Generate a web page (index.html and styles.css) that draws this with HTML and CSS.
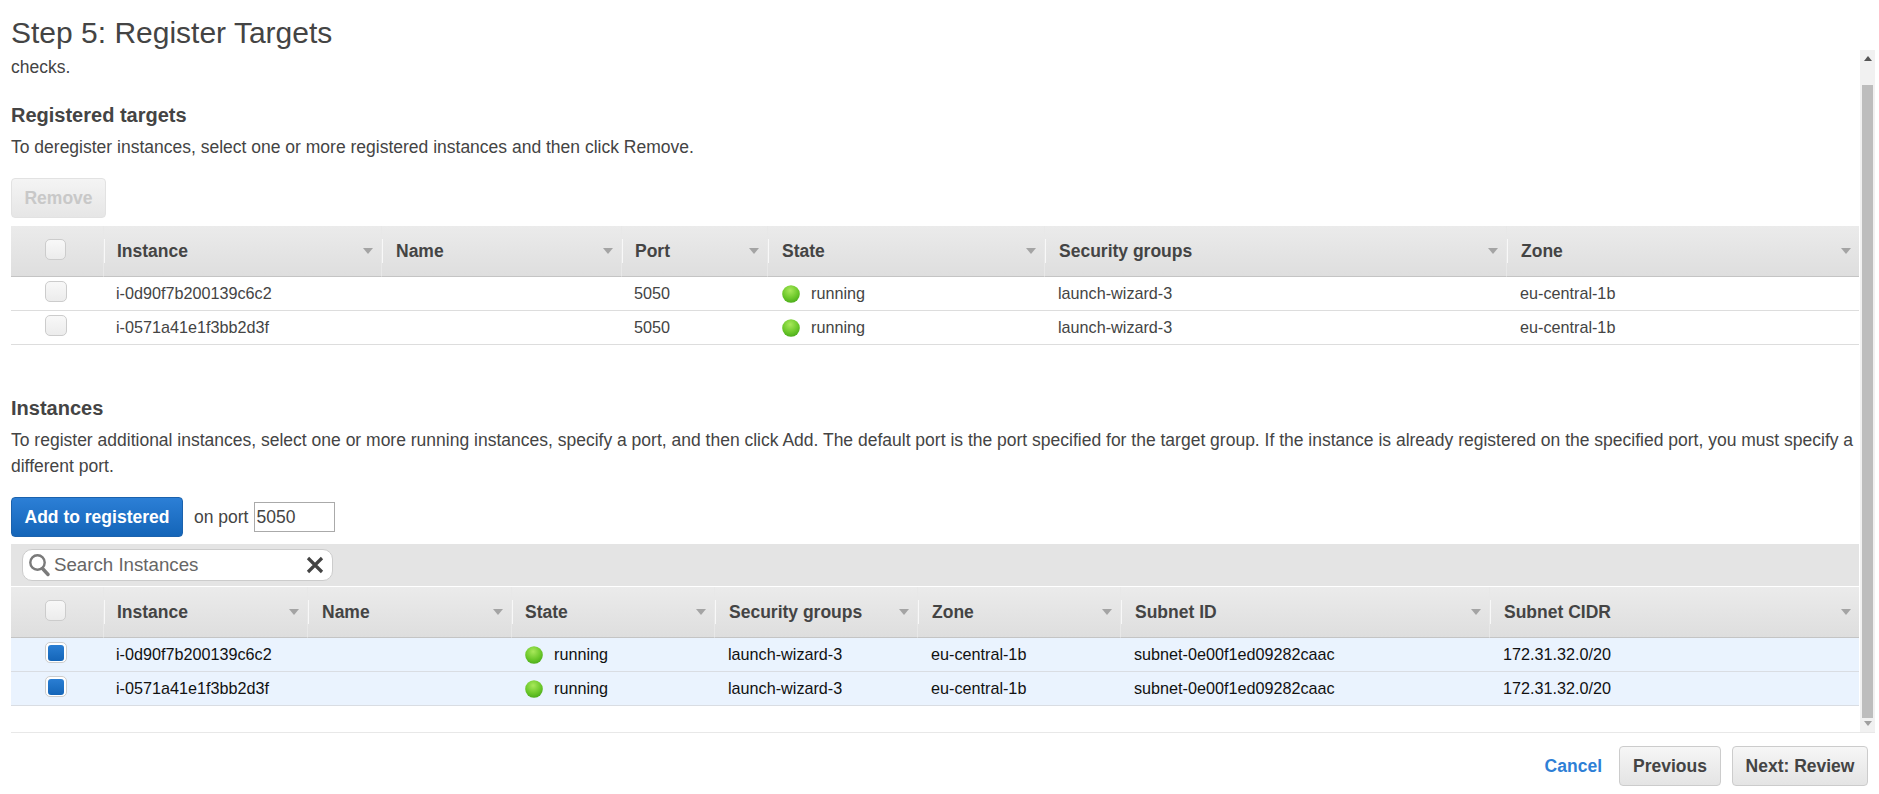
FILE: index.html
```html
<!DOCTYPE html>
<html lang="en">
<head>
<meta charset="utf-8">
<title>Step 5: Register Targets</title>
<link rel="stylesheet" href="styles.css">
</head>
<body>
<svg class="defs" width="0" height="0" aria-hidden="true">
  <defs>
    <radialGradient id="ball" cx="45%" cy="30%" r="75%">
      <stop offset="0" stop-color="#a8e85a"/>
      <stop offset="0.6" stop-color="#6cc82a"/>
      <stop offset="1" stop-color="#46a818"/>
    </radialGradient>
  </defs>
</svg>
<main class="wizard">
  <h1 class="title">Step 5: Register Targets</h1>
  <div class="scroller">
    <div class="content">
      <p class="cut">checks.</p>
      <h2 class="section-title">Registered targets</h2>
      <p class="desc">To deregister instances, select one or more registered instances and then click Remove.</p>
      <button class="btn btn-disabled" type="button">Remove</button>
      <table class="grid grid-a">
        <thead>
          <tr>
            <th class="c-sel"><span class="cb"></span></th>
            <th class="a1"><span class="th-in">Instance<i class="sort"></i></span></th>
            <th class="a2"><span class="th-in">Name<i class="sort"></i></span></th>
            <th class="a3"><span class="th-in">Port<i class="sort"></i></span></th>
            <th class="a4"><span class="th-in">State<i class="sort"></i></span></th>
            <th class="a5"><span class="th-in">Security groups<i class="sort"></i></span></th>
            <th><span class="th-in">Zone<i class="sort"></i></span></th>
          </tr>
        </thead>
        <tbody>
          <tr>
            <td class="sel"><span class="cb cb-row"></span></td>
            <td>i-0d90f7b200139c6c2</td><td></td><td>5050</td>
            <td><span class="state"><svg class="dot" viewBox="0 0 18 18"><circle cx="9" cy="9" r="8.8" fill="url(#ball)"/></svg>running</span></td>
            <td>launch-wizard-3</td><td>eu-central-1b</td>
          </tr>
          <tr>
            <td class="sel"><span class="cb cb-row"></span></td>
            <td>i-0571a41e1f3bb2d3f</td><td></td><td>5050</td>
            <td><span class="state"><svg class="dot" viewBox="0 0 18 18"><circle cx="9" cy="9" r="8.8" fill="url(#ball)"/></svg>running</span></td>
            <td>launch-wizard-3</td><td>eu-central-1b</td>
          </tr>
        </tbody>
      </table>
      <h2 class="section-title section-two">Instances</h2>
      <p class="desc desc-two">To register additional instances, select one or more running instances, specify a port, and then click Add. The default port is the port specified for the target group. If the instance is already registered on the specified port, you must specify a different port.</p>
      <div class="add-row">
        <button class="btn btn-primary" type="button">Add to registered</button>
        <span class="on-port">on port</span>
        <input class="port" type="text" value="5050" aria-label="Port">
      </div>
      <div class="toolbar">
        <div class="search">
          <svg class="search-icon" viewBox="0 0 22 24"><circle cx="9.5" cy="9.5" r="7.2" fill="none" stroke="#7a7a7a" stroke-width="2.4"/><path d="M14.5 15.5l5.5 6" stroke="#7a7a7a" stroke-width="3.4" stroke-linecap="round"/></svg>
          <span class="search-text">Search Instances</span>
          <svg class="clear-icon" viewBox="0 0 18 18"><path d="M2 2l14 14M16 2L2 16" stroke="#444" stroke-width="3.2"/></svg>
        </div>
      </div>
      <table class="grid grid-b">
        <thead>
          <tr>
            <th class="c-sel"><span class="cb"></span></th>
            <th class="b1"><span class="th-in">Instance<i class="sort"></i></span></th>
            <th class="b2"><span class="th-in">Name<i class="sort"></i></span></th>
            <th class="b3"><span class="th-in">State<i class="sort"></i></span></th>
            <th class="b4"><span class="th-in">Security groups<i class="sort"></i></span></th>
            <th class="b5"><span class="th-in">Zone<i class="sort"></i></span></th>
            <th class="b6"><span class="th-in">Subnet ID<i class="sort"></i></span></th>
            <th><span class="th-in">Subnet CIDR<i class="sort"></i></span></th>
          </tr>
        </thead>
        <tbody>
          <tr class="picked">
            <td class="sel"><span class="cb cb-row cb-on"></span></td>
            <td>i-0d90f7b200139c6c2</td><td></td>
            <td><span class="state"><svg class="dot" viewBox="0 0 18 18"><circle cx="9" cy="9" r="8.8" fill="url(#ball)"/></svg>running</span></td>
            <td>launch-wizard-3</td><td>eu-central-1b</td><td>subnet-0e00f1ed09282caac</td><td>172.31.32.0/20</td>
          </tr>
          <tr class="picked">
            <td class="sel"><span class="cb cb-row cb-on"></span></td>
            <td>i-0571a41e1f3bb2d3f</td><td></td>
            <td><span class="state"><svg class="dot" viewBox="0 0 18 18"><circle cx="9" cy="9" r="8.8" fill="url(#ball)"/></svg>running</span></td>
            <td>launch-wizard-3</td><td>eu-central-1b</td><td>subnet-0e00f1ed09282caac</td><td>172.31.32.0/20</td>
          </tr>
        </tbody>
      </table>
    </div>
    <div class="scrollbar">
      <i class="sb-up"></i>
      <div class="sb-thumb"></div>
      <i class="sb-down"></i>
    </div>
  </div>
  <footer class="footer">
    <a class="cancel" href="#">Cancel</a>
    <button class="btn btn-prev" type="button">Previous</button>
    <button class="btn btn-next" type="button">Next: Review</button>
  </footer>
</main>
</body>
</html>
```
FILE: styles.css
```css
* { box-sizing: border-box; }
html, body { margin: 0; height: 100%; background: #fff; overflow: hidden; }
body { font-family: "Liberation Sans", Arial, sans-serif; font-size: 17.5px; color: #444; }
.defs { position: absolute; }
.wizard { width: 1879px; height: 794px; display: flex; flex-direction: column; }
.title { margin: 0; height: 50px; padding: 16px 0 0 11px; font-size: 30px; line-height: 34px; font-weight: 400; color: #444; }
.scroller { height: 682px; display: flex; overflow: hidden; }
.content { width: 1860px; padding-left: 11px; flex: none; }
.cut { margin: 8px 0 0; line-height: 18px; }
.section-title { margin: 0; font-size: 20px; line-height: 24px; font-weight: 700; color: #444; padding-top: 27px; }
.desc { margin: 10px 0 0; line-height: 20px; color: #444; }
.section-two { padding-top: 51px; }
.desc-two { line-height: 26px; margin-top: 7px; width: 1848px; }
.btn { font-family: inherit; font-size: 17.5px; font-weight: 700; height: 40px; border-radius: 4px; border: 1px solid #ccc; background: linear-gradient(#f6f6f6, #e4e4e4); color: #444; padding: 0; display: block; }
.btn-disabled { width: 95px; margin-top: 21px; color: #c8c8c8; border-color: #e2e2e2; background: linear-gradient(#f4f4f4, #e6e6e6); }
.btn-primary { width: 172px; color: #fff; border-color: #1b62ad; background: linear-gradient(#2c7fd6, #1465b8); }
.btn-prev { width: 102px; }
.btn-next { width: 136px; }
.grid { border-collapse: separate; border-spacing: 0; table-layout: fixed; width: 1848px; }
.grid-a { margin-top: 8px; }
.grid th { height: 51px; padding: 0; text-align: left; font-size: 17.5px; font-weight: 700; color: #444; background: linear-gradient(#ebebeb, #dedede); border-bottom: 1px solid #c4c4c4; border-right: 1px solid #e8e8e8; vertical-align: middle; }
.grid th:last-child { border-right: 0; }
.th-in { display: flex; align-items: center; justify-content: space-between; height: 24px; padding: 0 8px 0 13px; border-left: 1px solid #f8f8f8; }
.a1 .th-in, .a3 .th-in, .b1 .th-in, .b3 .th-in { padding-left: 12px; }
.sort { width: 0; height: 0; border-left: 5px solid transparent; border-right: 5px solid transparent; border-top: 6px solid #a4a4a4; }
.grid td { height: 34px; padding: 0 0 0 13px; border-bottom: 1px solid #ddd; font-size: 16.2px; color: #444; white-space: nowrap; vertical-align: middle; }
.grid td:nth-child(2), .grid-a td:nth-child(4) { padding-left: 12px; }
.grid .sel { padding: 0; }
.c-sel { width: 93px; }
th.c-sel, td.sel { text-align: left; }
th.c-sel { padding-left: 34px !important; }
td.sel { padding-left: 34px !important; }
.a1 { width: 278px; } .a2 { width: 240px; } .a3 { width: 146px; } .a4 { width: 277px; } .a5 { width: 462px; }
.b1 { width: 204px; } .b2 { width: 204px; } .b3 { width: 203px; } .b4 { width: 203px; } .b5 { width: 203px; } .b6 { width: 369px; }
.cb { display: block; width: 21px; height: 21px; border-radius: 5px; border: 1px solid #ccc; background: linear-gradient(#f8f8f8, #ececec); margin-bottom: 3px; }
.cb-row { width: 22px; margin-bottom: 4px; }
.cb-on { padding: 2px; background: #fff; }
.cb-on::after { content: ""; display: block; width: 16px; height: 16px; border-radius: 3px; background: linear-gradient(#2a7ed3, #1465b8); }
.picked td { background: #eaf3fe; color: #111; border-bottom-color: #d9dde3; }
.state { display: flex; align-items: center; gap: 11px; }
.grid-a .state { padding-left: 1px; }
.dot { width: 18px; height: 18px; flex: none; }
.add-row { display: flex; align-items: center; margin-top: 18px; height: 40px; }
.on-port { margin-left: 11px; }
.port { margin-left: 6px; width: 81px; height: 30px; border: 1px solid #aaa; padding: 0 1px; font: 17.5px "Liberation Sans", Arial, sans-serif; color: #444; border-radius: 0; background: #fff; }
.toolbar { margin-top: 7px; height: 42px; width: 1848px; background: #e4e4e4; padding: 5px 0 0 11px; }
.search { width: 311px; height: 32px; border: 1px solid #ccc; border-radius: 10px; background: #fff; display: flex; align-items: center; padding: 0 8px 0 5px; }
.search-icon { width: 22px; height: 24px; flex: none; }
.search-text { margin-left: 4px; font-size: 18.7px; color: #666; flex: 1; }
.clear-icon { width: 18px; height: 18px; flex: none; }
.grid-b { margin-top: 1px; }
.scrollbar { width: 15px; background: #f1f1f1; display: flex; flex-direction: column; align-items: center; }
.sb-up { margin-top: 6px; width: 0; height: 0; border-left: 4px solid transparent; border-right: 4px solid transparent; border-bottom: 5px solid #555; }
.sb-thumb { width: 11px; flex: 1; margin-top: 24px; margin-bottom: 3px; background: #bdbdbd; }
.sb-down { margin-bottom: 6px; width: 0; height: 0; border-left: 4px solid transparent; border-right: 4px solid transparent; border-top: 5px solid #a0a0a0; }
.footer { height: 62px; border-top: 1px solid #e8e8e8; margin: 0 4px 0 11px; display: flex; justify-content: flex-end; align-items: flex-start; padding: 13px 7px 0 0; gap: 11px; }
.cancel { color: #2e7fd6; font-weight: 700; text-decoration: none; line-height: 40px; margin-right: 6px; }
```
